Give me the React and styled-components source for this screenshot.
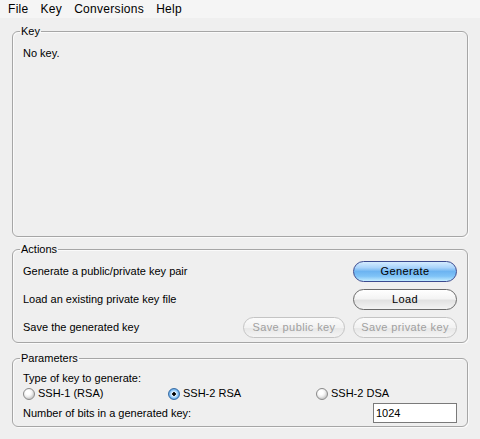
import React from "react";
import styled, { createGlobalStyle } from "styled-components";

const Global = createGlobalStyle`
  html, body { margin: 0; padding: 0; }
  body {
    background: #efefef;
    font-family: "Liberation Sans", Arial, sans-serif;
    font-size: 11px;
    color: #000;
    width: 480px;
    height: 439px;
    overflow: hidden;
  }
`;

const Window = styled.div`
  width: 480px;
  height: 439px;
  display: flex;
  flex-direction: column;
  background: #efefef;
`;

const MenuBar = styled.div`
  height: 18px;
  background: #f5f5f5;
  display: flex;
  align-items: center;
  padding-left: 2px;
  font-size: 12px;
  letter-spacing: 0.3px;
`;

const MenuItem = styled.span`
  padding: 0 6px;
  line-height: 18px;
`;

const Content = styled.div`
  display: flex;
  flex-direction: column;
  padding: 7px 12px 0 12px;
`;

const Group = styled.fieldset`
  margin: 0 0 ${(p) => p.$mb || 0}px 0;
  width: 456px;
  box-sizing: border-box;
  height: ${(p) => p.$h}px;
  border: 1px solid #a6a6a6;
  border-radius: 6px;
  box-shadow: inset 1px 1px 0 #fafafa, 1px 1px 0 #fafafa;
  padding: ${(p) => p.$pad || "0 10px"};
  display: flex;
  flex-direction: column;
`;

const Legend = styled.legend`
  padding: 0 1px;
  margin-left: -3px;
  font-size: 11px;
  line-height: 13px;
`;

const Text = styled.div`
  line-height: 13px;
`;

const ActionRow = styled.div`
  display: flex;
  align-items: center;
  justify-content: space-between;
  height: ${(p) => p.$h || 28}px;
`;

const ButtonPair = styled.div`
  display: flex;
  gap: 8px;
`;

const Button = styled.button`
  width: ${(p) => p.$w || 104}px;
  height: 21px;
  border-radius: 11px;
  font-family: "Liberation Sans", Arial, sans-serif;
  font-size: 11px;
  letter-spacing: 0.4px;
  padding: 0;
  cursor: default;
  ${(p) =>
    p.$variant === "primary"
      ? `
    border: 1px solid #3b4a8f;
    color: #000;
    background: linear-gradient(to bottom, #d4ecff 0%, #a9d3fb 30%, #6db4f1 50%, #7fc3f7 75%, #c2ecff 100%);
  `
      : p.$variant === "disabled"
      ? `
    border: 1px solid #c4c4c4;
    color: #a0a0a0;
    background: linear-gradient(to bottom, #fbfbfb 0%, #f2f2f2 50%, #e8e8e8 55%, #f4f4f4 100%);
  `
      : `
    border: 1px solid #6a6a6a;
    color: #000;
    background: linear-gradient(to bottom, #ffffff 0%, #f4f4f4 45%, #e2e2e2 55%, #f3f3f3 100%);
  `}
`;

const RadioRow = styled.div`
  display: grid;
  grid-template-columns: 145px 148px 1fr;
  height: 15px;
  margin-top: 1px;
  align-items: center;
`;

const RadioLabel = styled.label`
  display: flex;
  align-items: center;
  gap: 3px;
  line-height: 13px;
`;

const RadioDot = styled.span`
  width: 12px;
  height: 12px;
  border-radius: 50%;
  box-sizing: border-box;
  border: 1px solid ${(p) => (p.$on ? "#3a6ea5" : "#8a8a8a")};
  background: ${(p) =>
    p.$on
      ? "radial-gradient(circle at 50% 50%, #000 0 1.5px, #e8f4ff 2px, #8cc6f5 4px, #4a90d8 5.5px)"
      : "radial-gradient(circle at 40% 35%, #ffffff 0 2px, #f0f0f0 4px, #cfcfcf 6px)"};
  display: inline-block;
`;

const BitsRow = styled.div`
  display: flex;
  align-items: center;
  justify-content: space-between;
  height: 22px;
  margin-top: 1px;
`;

const Input = styled.input`
  width: 84px;
  height: 20px;
  box-sizing: border-box;
  border: 1px solid #7a7a7a;
  background: #fff;
  font-family: "Liberation Sans", Arial, sans-serif;
  font-size: 11px;
  padding: 0 2px;
  outline: none;
`;

function Radio({ on, children }) {
  return (
    <RadioLabel>
      <RadioDot $on={on} />
      {children}
    </RadioLabel>
  );
}

export default function App() {
  return (
    <Window>
      <Global />
      <MenuBar>
        <MenuItem>File</MenuItem>
        <MenuItem>Key</MenuItem>
        <MenuItem>Conversions</MenuItem>
        <MenuItem>Help</MenuItem>
      </MenuBar>
      <Content>
        <Group $h={212} $pad="9px 10px" $mb={6}>
          <Legend>Key</Legend>
          <Text>No key.</Text>
        </Group>
        <Group $h={100} $pad="1px 10px 0 10px" $mb={9}>
          <Legend>Actions</Legend>
          <ActionRow>
            <Text>Generate a public/private key pair</Text>
            <Button $variant="primary">Generate</Button>
          </ActionRow>
          <ActionRow>
            <Text>Load an existing private key file</Text>
            <Button>Load</Button>
          </ActionRow>
          <ActionRow>
            <Text>Save the generated key</Text>
            <ButtonPair>
              <Button $variant="disabled" $w={102} disabled>
                Save public key
              </Button>
              <Button $variant="disabled" $w={104} disabled>
                Save private key
              </Button>
            </ButtonPair>
          </ActionRow>
        </Group>
        <Group $h={75} $pad="7px 10px 0 10px">
          <Legend>Parameters</Legend>
          <Text>Type of key to generate:</Text>
          <RadioRow>
            <Radio>SSH-1 (RSA)</Radio>
            <Radio on>SSH-2 RSA</Radio>
            <Radio>SSH-2 DSA</Radio>
          </RadioRow>
          <BitsRow>
            <Text>Number of bits in a generated key:</Text>
            <Input defaultValue="1024" />
          </BitsRow>
        </Group>
      </Content>
    </Window>
  );
}
